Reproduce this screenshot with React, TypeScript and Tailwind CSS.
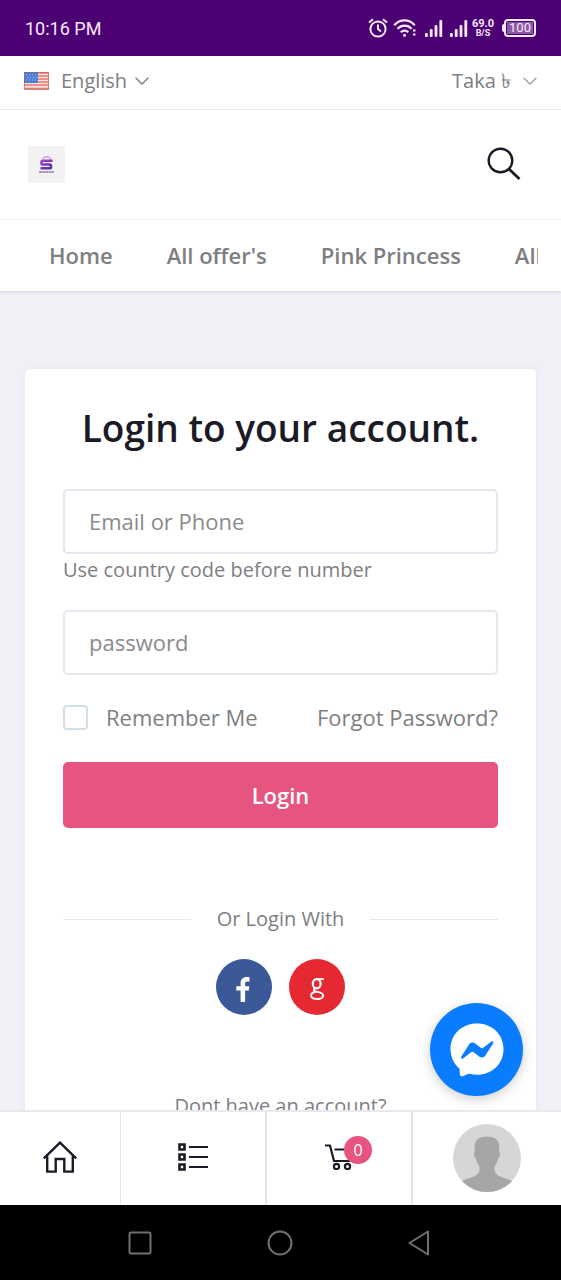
import { useState } from 'react';
import type { ReactNode } from 'react';

const NAV_LINKS = ['Home', "All offer's", 'Pink Princess', 'All'];

function SignalIcon() {
  return (
    <svg viewBox="0 0 18 18" className="h-[18px] w-[18px]" fill="currentColor">
      <rect x="0" y="14" width="2.800" height="4" rx="1" />
      <rect x="4.800" y="10" width="2.800" height="8" rx="1" />
      <rect x="9.600" y="6" width="2.800" height="12" rx="1" />
      <rect x="14.400" y="1" width="2.800" height="17" rx="1" />
    </svg>
  );
}

function StatusBar() {
  return (
    <div className="flex h-14 shrink-0 items-center justify-between bg-[#4b0073] px-[25px] font-['Roboto',sans-serif] text-[#fbe9ff]">
      <span className="text-[18px]">10:16 PM</span>
      <div className="flex items-center">
        <svg viewBox="0 0 20 20" className="h-5 w-5" fill="none" stroke="currentColor" strokeWidth="2">
          <circle cx="10" cy="11" r="7.6" />
          <path d="M10 6.5V11l3 2.500M1 4.500 5 1.200M19 4.500l-4-3.300" />
        </svg>
        <svg viewBox="0 0 24 20" className="ml-[5px] h-5 w-6" fill="none" stroke="currentColor" strokeWidth="2.200">
          <path d="M1.200 7.200C7 .8 16 .8 21.800 7.200M4.500 10.800c4.200-4.200 10-4.200 14.200 0M7.800 14.200c2.200-2 5.300-2 7.500 0" />
          <circle cx="11.500" cy="17.300" r="1.500" fill="currentColor" stroke="none" />
          <path d="M20 12.500h2.500M20 16.500h2.500" />
        </svg>
        <span className="ml-2 flex gap-[7px]">
          <SignalIcon />
          <SignalIcon />
        </span>
        <span className="ml-1 flex flex-col items-center font-bold">
          <span className="text-[11px] leading-[10px]">69.0</span>
          <span className="text-[9px] leading-[9px]">B/S</span>
        </span>
        <span className="ml-2 h-2 w-[2px] rounded-l bg-current" />
        <span className="flex h-[18px] w-8 items-center justify-center rounded-[4px] border-2 border-current p-px">
          <span className="flex h-full w-full items-center justify-center bg-[#8a5aa3] text-[13px] leading-3">100</span>
        </span>
      </div>
    </div>
  );
}

function Chevron() {
  return (
    <svg viewBox="0 0 14 8" className="pointer-events-none h-2 w-[14px]" fill="none" stroke="currentColor" strokeWidth="1.4">
      <path d="m.6.8 6.400 6.200L13.400.8" />
    </svg>
  );
}

function UsFlag() {
  return (
    <svg viewBox="0 0 25 18" className="h-[18px] w-[25px]">
      <rect width="25" height="18" fill="#fbe3df" />
      <path d="M0 1h25M0 4h25M0 7h25M0 10h25M0 13h25M0 16.500h25" stroke="#e8776c" strokeWidth="1.600" />
      <rect width="14" height="11" fill="#4a7fd6" />
      <path d="M2 3h11M3 5.500h10M2 8h11" stroke="#a9c8f5" strokeDasharray="1 2" />
      <rect x=".5" y=".5" width="24" height="17" fill="none" stroke="#a8605c" strokeOpacity=".6" />
    </svg>
  );
}

function StoreLogo() {
  return (
    <svg viewBox="0 0 37 37" className="h-[37px] w-[37px]">
      <defs>
        <linearGradient id="bag" x1="0" y1="0" x2="1" y2="1">
          <stop offset="0" stopColor="#a63fd0" />
          <stop offset="1" stopColor="#4a2fa5" />
        </linearGradient>
      </defs>
      <rect width="37" height="37" fill="#f2f2f2" />
      <path d="M15 13.500v-.5c0-3 7.500-3 7.500 0v.5" fill="none" stroke="#b070d8" strokeWidth="1" />
      <path d="M24.500 14.800H15q-1.500 0-1.500 1.200v1.200q0 1.300 1.500 1.300h6.500q1.500 0 1.500 1.300v1.200q0 1.300-1.500 1.300h-9" fill="none" stroke="url(#bag)" strokeWidth="2.600" />
      <path d="M11 26h15" stroke="#5b3a96" strokeWidth="1.200" strokeDasharray="3 .3" />
    </svg>
  );
}

function Header() {
  return (
    <header className="shrink-0 bg-white text-[#7e7e82] shadow-[0_1px_3px_rgba(0,0,0,0.12)]">
      <div className="flex h-[54px] items-center justify-between border-b border-[#ececee] px-6 pb-[3px] text-[20px]">
        <label className="flex items-center">
          <UsFlag />
          <select aria-label="Language" className="ml-3 field-sizing-content appearance-none bg-transparent">
            <option>English</option>
          </select>
          <span className="ml-2"><Chevron /></span>
        </label>
        <label className="flex items-center">
          <select aria-label="Currency" className="field-sizing-content appearance-none bg-transparent">
            <option>Taka ৳</option>
          </select>
          <span className="ml-3 text-[#a0a0a4]"><Chevron /></span>
        </label>
      </div>
      <div className="flex h-[110px] items-center justify-between border-b border-[#f0f0f2] pr-10 pl-7">
        <a href="#home" aria-label="Store home">
          <StoreLogo />
        </a>
        <button type="button" aria-label="Search" className="pb-[2px] text-[#1b1b28]">
          <svg viewBox="0 0 34 34" className="h-[34px] w-[34px]" fill="none" stroke="currentColor" strokeWidth="2.400">
            <circle cx="13.500" cy="13.500" r="11.800" />
            <path d="m21.700 21.700 10.800 10.300" strokeWidth="2.800" />
          </svg>
        </button>
      </div>
      <nav className="mx-[23px] flex h-[71px] items-center overflow-hidden text-[22px] font-semibold">
        {NAV_LINKS.map((label) => (
          <a key={label} href="#nav" className="shrink-0 px-[27px] first:pl-[26px]">
            {label}
          </a>
        ))}
      </nav>
    </header>
  );
}

function LoginCard() {
  const [remember, setRemember] = useState(false);
  const inputClass =
    'block h-[65px] w-full rounded-[5px] border-2 border-[#e6e6ee] bg-white px-6 pb-px text-[22px] placeholder:text-[#8a8a8e]';

  return (
    <section className="rounded-[5px] bg-white px-[38px] pt-[35px] pb-10 text-[#7e7e82] shadow-[0_0_6px_rgba(0,0,0,0.05)]">
      <h1 className="text-center text-[37px] leading-12 font-semibold whitespace-nowrap text-[#1b1b28]">
        Login to your account.
      </h1>
      <form className="mt-[37px]" onSubmit={(e) => e.preventDefault()}>
        <input type="text" aria-label="Email or Phone" placeholder="Email or Phone" className={inputClass} />
        <p className="mb-6 text-[20px] leading-8">Use country code before number</p>
        <input type="password" aria-label="Password" placeholder="password" className={inputClass} />
        <div className="mt-6 flex items-center justify-between text-[22px] leading-9">
          <label className="flex items-center gap-[18px]">
            <input
              type="checkbox"
              checked={remember}
              onChange={(e) => setRemember(e.target.checked)}
              className="h-[25px] w-[25px] appearance-none rounded-[4px] border-2 border-[#d3dfe4] checked:bg-[#e7547f]"
            />
            Remember Me
          </label>
          <a href="#forgot">Forgot Password?</a>
        </div>
        <button type="submit" className="mt-[27px] h-[66px] w-full rounded-[5px] bg-[#e7547f] text-[22px] font-semibold text-white">
          Login
        </button>
      </form>
      <div className="mt-[75px] flex items-center gap-[26px] text-[20px] leading-8">
        <span className="h-px flex-1 bg-[#e8e8ea]" />
        Or Login With
        <span className="h-px flex-1 bg-[#e8e8ea]" />
      </div>
      <div className="mt-6 flex justify-center gap-[17px] text-white">
        <a href="#facebook" aria-label="Facebook" className="flex h-14 w-14 items-center justify-center rounded-full bg-[#3b5998]">
          <svg viewBox="0 0 14 25" className="mt-1 mr-[2px] h-[25px] w-[14px]" fill="currentColor">
            <path d="M13.500.3v4.200h-2.200c-1.900 0-2.200.8-2.200 2.200v2.600h4.200l-.5 4.200H9.100V25H4.600V13.500H.3V9.300h4.300V6.100C4.600 2.200 7 0 10.500 0c1.400 0 2.500.1 3 .3z" />
          </svg>
        </a>
        <a href="#google" aria-label="Google" className="flex h-14 w-14 items-center justify-center rounded-full bg-[#e62833]">
          <svg viewBox="0 0 15 22" className="mt-1 h-[22px] w-[15px]" fill="none" stroke="currentColor" strokeWidth="1.500">
            <ellipse cx="6.700" cy="5.700" rx="3.900" ry="4.600" strokeWidth="2.200" />
            <path d="M7 1h6.800" strokeWidth="1.800" />
            <path d="M5.500 10.200c-2.800 1.500-1.600 3 1 3.500 3.500.7 6.600 1 6.600 3.800 0 2.200-2.600 3.500-6.100 3.500-3.700 0-5.900-1.300-5.900-3.500 0-2 1.800-3.300 4.400-3.800" strokeWidth="1.900" />
          </svg>
        </a>
      </div>
      <p className="mt-[75px] text-center text-[20px] leading-8">Dont have an account?</p>
    </section>
  );
}

function Tab({ label, className, children }: { label: string; className: string; children: ReactNode }) {
  return (
    <a href="#tab" aria-label={label} className={`flex items-center justify-center border-[#e4e4ea] text-[#1b1b28] ${className}`}>
      {children}
    </a>
  );
}

function TabBar() {
  return (
    <nav className="flex h-[95px] shrink-0 border-t-2 border-[#e8e8ee] bg-white">
      <Tab label="Home" className="w-[121px] border-r pb-1">
        <svg viewBox="0 0 34 32" className="h-8 w-[34px]" fill="none" stroke="currentColor" strokeWidth="2.400">
          <path d="M.8 17.500 17 1.600l16.200 15.900" />
          <path d="M4.200 15v15.600h8.500V18h8.600v12.600h8.500V15" />
        </svg>
      </Tab>
      <Tab label="Categories" className="flex-1 border-r-2 pb-1">
        <svg viewBox="0 0 30 28" className="h-7 w-[30px]" fill="none" stroke="currentColor" strokeWidth="2.600">
          <path d="M1.500 1.500h5v5h-5zM1.500 11.500h5v5h-5zM1.500 21.500h5v5h-5z" />
          <path d="M11 4h19M11 14h19M11 24h19" strokeWidth="2.200" />
        </svg>
      </Tab>
      <Tab label="Cart" className="flex-1 border-r-2 pb-1">
        <span className="relative">
          <svg viewBox="0 0 28 26" className="h-[26px] w-7" fill="none" stroke="currentColor" strokeWidth="2.200">
            <path d="M0 1.500h5L9 17h15.500l3-11.500H9.500" />
            <circle cx="11.500" cy="22.500" r="2.600" />
            <circle cx="22.500" cy="22.500" r="2.600" />
          </svg>
          <span className="absolute -top-2 left-[19px] flex h-7 w-7 items-center justify-center rounded-full bg-[#e7547f] text-[16px] text-white">
            0
          </span>
        </span>
      </Tab>
      <Tab label="Account" className="w-[148px] pb-px">
        <svg viewBox="0 0 68 68" className="h-[68px] w-[68px]">
          <clipPath id="avatar">
            <circle cx="34" cy="34" r="34" />
          </clipPath>
          <g clipPath="url(#avatar)">
            <rect width="68" height="68" fill="#d6d6d6" />
            <path d="M34 12.500c8.500 0 12.500 4 12.300 11v4.500c1.300.5.900 5.500-1.200 6.500-.8 4-2.100 6-3.600 8v4c1 4 4.500 5.500 8 7 4.500 1.600 8 2 11.500 5V70H7V58.500c3.500-3 7-3.400 11.500-5 3.500-1.500 7-3 8-7v-4c-1.500-2-2.800-4-3.600-8-2.100-1-2.500-6-1.200-6.500v-4.500c-.2-7 3.800-11 12.300-11z" fill="#a6a6a6" />
          </g>
        </svg>
      </Tab>
    </nav>
  );
}

function SystemNav() {
  return (
    <div className="flex h-[75px] shrink-0 items-center justify-center gap-[115px] bg-black pr-1 text-[#707070]">
      <button type="button" aria-label="Recent apps">
        <svg viewBox="0 0 24 24" className="h-6 w-6" fill="none" stroke="currentColor" strokeWidth="2">
          <rect x="1.500" y="1.500" width="21" height="21" rx="1.500" />
        </svg>
      </button>
      <button type="button" aria-label="Home screen">
        <svg viewBox="0 0 26 26" className="h-[26px] w-[26px]" fill="none" stroke="currentColor" strokeWidth="2">
          <circle cx="13" cy="13" r="11.500" />
        </svg>
      </button>
      <button type="button" aria-label="Back">
        <svg viewBox="0 0 22 26" className="h-[26px] w-[22px]" fill="none" stroke="currentColor" strokeWidth="2" strokeLinejoin="round">
          <path d="M20 1.500v23L1.500 13z" />
        </svg>
      </button>
    </div>
  );
}

export default function App() {
  return (
    <div className="flex h-screen flex-col overflow-hidden bg-[#f0f1f7] font-['Open_Sans','Noto_Sans',sans-serif]">
      <StatusBar />
      <Header />
      <div className="relative flex min-h-0 flex-1 flex-col">
        <main className="min-h-0 flex-1 overflow-hidden px-[25px] pt-[78px]">
          <LoginCard />
        </main>
        <button
          type="button"
          aria-label="Messenger chat"
          className="absolute right-[38px] bottom-[14px] flex h-[93px] w-[93px] items-center justify-center rounded-full bg-[#0a7cff] shadow-[0_3px_12px_rgba(0,0,0,0.2)]"
        >
          <svg viewBox="0 0 54 54" className="h-[54px] w-[54px]">
            <path d="M27 .5C12 .5.500 11.300.500 26c0 7.700 3.200 14.400 8.400 19 .5.400.7 1 .7 1.600l.2 4.700c0 1.500 1.500 2.500 2.900 1.900l5.300-2.300c.5-.2 1-.2 1.500-.1 2.400.7 4.900 1 7.500 1 15 0 26.500-11 26.500-25.800S42 .5 27 .5z" fill="#fff" />
            <path d="m11.200 33.800 7.800-12.400c1.300-2 4-2.500 5.900-1.100l6.200 4.700c.6.400 1.300.4 1.900 0l8.400-6.400c1.100-.8 2.500.5 1.800 1.700L35.400 32.600c-1.300 2-4 2.500-5.900 1.100l-6.200-4.700c-.6-.4-1.300-.4-1.900 0L13 35.400c-1.100.9-2.600-.4-1.800-1.600z" fill="#0a7cff" />
          </svg>
        </button>
      </div>
      <TabBar />
      <SystemNav />
    </div>
  );
}
